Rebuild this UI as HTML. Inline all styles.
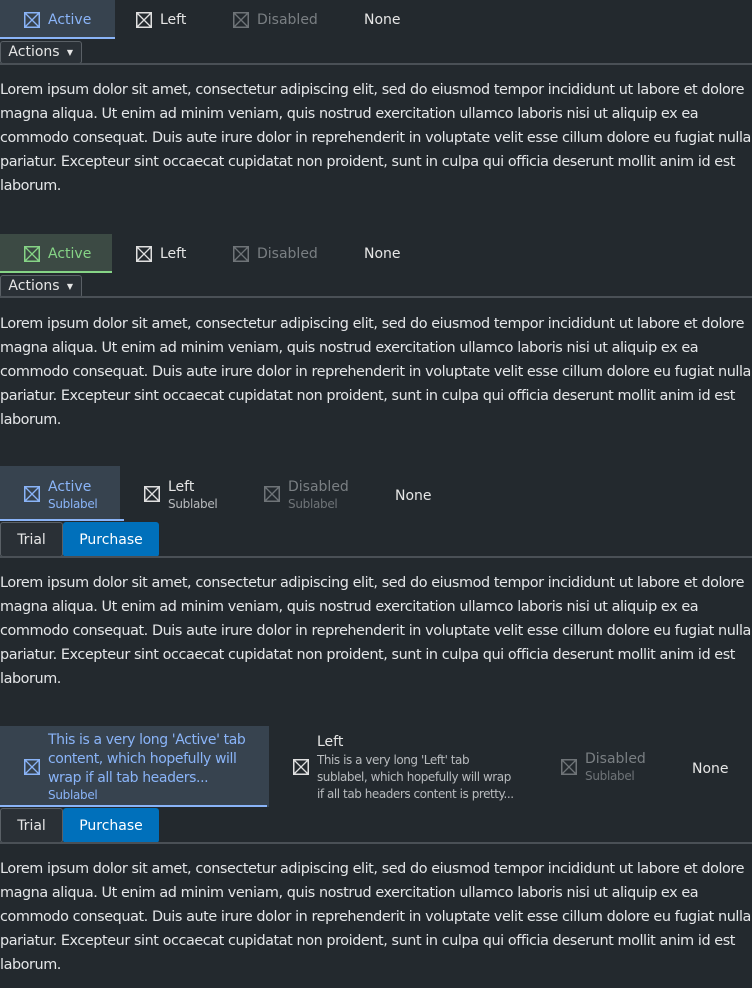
<!DOCTYPE html>
<html><head><style>
body{margin:0;width:752px;height:988px;background:#23292e;color:#e6e6e6;font-family:"DejaVu Sans","Liberation Sans",sans-serif;font-size:14px;position:relative;overflow:hidden}
.a{position:absolute}
.p{position:absolute;left:0;width:760px;font-size:14.4px;line-height:24px;white-space:nowrap;color:#e4e6e8;letter-spacing:-0.43px}
.ic{position:absolute;width:16px;height:16px}
.hr{position:absolute;left:0;width:752px;height:2px;background:#4a5056}
.btn{position:absolute;border:1px solid #5a6066;border-radius:3px;background:#2a3036;color:#e6e6e6;box-sizing:border-box;text-align:center}
.t{position:absolute;white-space:nowrap}
</style></head><body>
<svg width="0" height="0" style="position:absolute"><defs>
<symbol id="x" viewBox="0 0 16 16"><rect x="0.75" y="0.75" width="14.5" height="14.5" fill="none" stroke="currentColor" stroke-width="1.5"/><path d="M1 1L15 15M15 1L1 15" stroke="currentColor" stroke-width="1.3"/></symbol>
</defs></svg>

<!-- Section 1 -->
<div class="a" style="left:0;top:0;width:115px;height:38px;background:#37434f"></div>
<div class="a" style="left:0;top:37px;width:115px;height:2px;background:#8ab4f8"></div>
<svg class="ic" style="left:24px;top:12px;color:#8ab4f8"><use href="#x"/></svg>
<div class="t" style="left:48px;top:12px;color:#8ab4f8">Active</div>
<svg class="ic" style="left:136px;top:12px;color:#e0e0e0"><use href="#x"/></svg>
<div class="t" style="left:160px;top:12px">Left</div>
<svg class="ic" style="left:233px;top:12px;color:#6f7478"><use href="#x"/></svg>
<div class="t" style="left:257px;top:12px;color:#7a7f83">Disabled</div>
<div class="t" style="left:364px;top:12px">None</div>
<div class="btn" style="left:0;top:41px;width:82px;height:23px;line-height:21px;padding-right:14px">Actions<span style="position:absolute;right:8px;top:0;font-size:8px">▼</span></div>
<div class="hr" style="top:63px"></div>
<div class="p" style="top:78px">Lorem ipsum dolor sit amet, consectetur adipiscing elit, sed do eiusmod tempor incididunt ut labore et dolore<br>magna aliqua. Ut enim ad minim veniam, quis nostrud exercitation ullamco laboris nisi ut aliquip ex ea<br>commodo consequat. Duis aute irure dolor in reprehenderit in voluptate velit esse cillum dolore eu fugiat nulla<br>pariatur. Excepteur sint occaecat cupidatat non proident, sunt in culpa qui officia deserunt mollit anim id est<br>laborum.</div>

<!-- Section 2 -->
<div class="a" style="left:0;top:234px;width:112px;height:38px;background:#3c4a44"></div>
<div class="a" style="left:0;top:271px;width:112px;height:2px;background:#86d486"></div>
<svg class="ic" style="left:24px;top:246px;color:#86d486"><use href="#x"/></svg>
<div class="t" style="left:48px;top:246px;color:#86d486">Active</div>
<svg class="ic" style="left:136px;top:246px;color:#e0e0e0"><use href="#x"/></svg>
<div class="t" style="left:160px;top:246px">Left</div>
<svg class="ic" style="left:233px;top:246px;color:#6f7478"><use href="#x"/></svg>
<div class="t" style="left:257px;top:246px;color:#7a7f83">Disabled</div>
<div class="t" style="left:364px;top:246px">None</div>
<div class="btn" style="left:0;top:275px;width:82px;height:23px;line-height:21px;padding-right:14px">Actions<span style="position:absolute;right:8px;top:0;font-size:8px">▼</span></div>
<div class="hr" style="top:296px"></div>
<div class="p" style="top:312px">Lorem ipsum dolor sit amet, consectetur adipiscing elit, sed do eiusmod tempor incididunt ut labore et dolore<br>magna aliqua. Ut enim ad minim veniam, quis nostrud exercitation ullamco laboris nisi ut aliquip ex ea<br>commodo consequat. Duis aute irure dolor in reprehenderit in voluptate velit esse cillum dolore eu fugiat nulla<br>pariatur. Excepteur sint occaecat cupidatat non proident, sunt in culpa qui officia deserunt mollit anim id est<br>laborum.</div>

<!-- Section 3 -->
<div class="a" style="left:0;top:466px;width:120px;height:54px;background:#37434f"></div>
<div class="a" style="left:0;top:519px;width:124px;height:2px;background:#8ab4f8"></div>
<svg class="ic" style="left:24px;top:486px;color:#8ab4f8"><use href="#x"/></svg>
<div class="t" style="left:48px;top:479px;color:#8ab4f8">Active</div>
<div class="t" style="left:48px;top:497px;font-size:12px;color:#8ab4f8;letter-spacing:-0.3px">Sublabel</div>
<svg class="ic" style="left:144px;top:486px;color:#e0e0e0"><use href="#x"/></svg>
<div class="t" style="left:168px;top:479px">Left</div>
<div class="t" style="left:168px;top:497px;font-size:12px;color:#b8bbbe;letter-spacing:-0.3px">Sublabel</div>
<svg class="ic" style="left:264px;top:486px;color:#6f7478"><use href="#x"/></svg>
<div class="t" style="left:288px;top:479px;color:#7a7f83">Disabled</div>
<div class="t" style="left:288px;top:497px;font-size:12px;color:#6f7478;letter-spacing:-0.3px">Sublabel</div>
<div class="t" style="left:395px;top:488px">None</div>
<div class="btn" style="left:0;top:522px;width:63px;height:35px;line-height:35px">Trial</div>
<div class="btn" style="left:63px;top:522px;width:96px;height:35px;line-height:37px;background:#0070bb;border:none;color:#fff">Purchase</div>
<div class="hr" style="top:556px"></div>
<div class="p" style="top:571px">Lorem ipsum dolor sit amet, consectetur adipiscing elit, sed do eiusmod tempor incididunt ut labore et dolore<br>magna aliqua. Ut enim ad minim veniam, quis nostrud exercitation ullamco laboris nisi ut aliquip ex ea<br>commodo consequat. Duis aute irure dolor in reprehenderit in voluptate velit esse cillum dolore eu fugiat nulla<br>pariatur. Excepteur sint occaecat cupidatat non proident, sunt in culpa qui officia deserunt mollit anim id est<br>laborum.</div>

<!-- Section 4 -->
<div class="a" style="left:0;top:726px;width:269px;height:81px;background:#37434f"></div>
<div class="a" style="left:0;top:805px;width:267px;height:2px;background:#8ab4f8"></div>
<svg class="ic" style="left:24px;top:759px;color:#8ab4f8"><use href="#x"/></svg>
<div class="t" style="left:48px;top:731px;color:#8ab4f8;line-height:19px;letter-spacing:-0.4px">This is a very long 'Active' tab<br>content, which hopefully will<br>wrap if all tab headers...</div>
<div class="t" style="left:48px;top:788px;font-size:12px;color:#8ab4f8;letter-spacing:-0.3px">Sublabel</div>
<svg class="ic" style="left:293px;top:759px;color:#e0e0e0"><use href="#x"/></svg>
<div class="t" style="left:317px;top:734px">Left</div>
<div class="t" style="left:317px;top:752px;font-size:12px;line-height:17px;color:#b8bbbe;letter-spacing:-0.45px">This is a very long 'Left' tab<br>sublabel, which hopefully will wrap<br>if all tab headers content is pretty...</div>
<svg class="ic" style="left:561px;top:759px;color:#6f7478"><use href="#x"/></svg>
<div class="t" style="left:585px;top:751px;color:#7a7f83">Disabled</div>
<div class="t" style="left:585px;top:769px;font-size:12px;color:#6f7478;letter-spacing:-0.3px">Sublabel</div>
<div class="t" style="left:692px;top:761px">None</div>
<div class="btn" style="left:0;top:808px;width:63px;height:35px;line-height:35px">Trial</div>
<div class="btn" style="left:63px;top:808px;width:96px;height:35px;line-height:37px;background:#0070bb;border:none;color:#fff">Purchase</div>
<div class="hr" style="top:842px"></div>
<div class="p" style="top:857px">Lorem ipsum dolor sit amet, consectetur adipiscing elit, sed do eiusmod tempor incididunt ut labore et dolore<br>magna aliqua. Ut enim ad minim veniam, quis nostrud exercitation ullamco laboris nisi ut aliquip ex ea<br>commodo consequat. Duis aute irure dolor in reprehenderit in voluptate velit esse cillum dolore eu fugiat nulla<br>pariatur. Excepteur sint occaecat cupidatat non proident, sunt in culpa qui officia deserunt mollit anim id est<br>laborum.</div>
</body></html>
